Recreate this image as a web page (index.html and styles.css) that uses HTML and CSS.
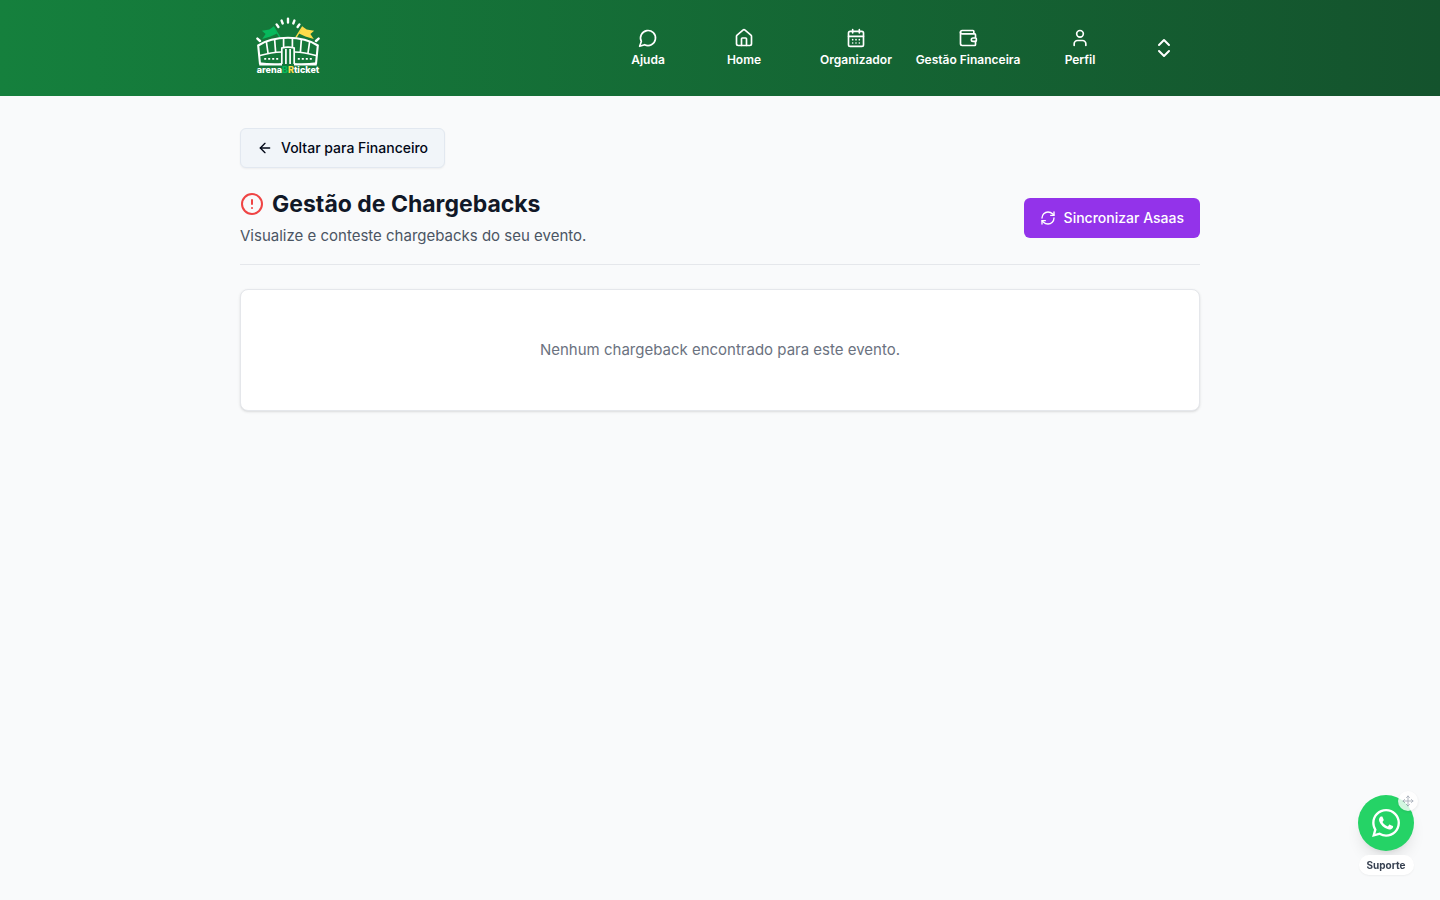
FILE: index.html
```html
<!DOCTYPE html>
<html lang="pt-BR">
<head>
  <meta charset="UTF-8" />
  <meta name="viewport" content="width=device-width, initial-scale=1.0"/>
  <title>Gestão de Chargebacks</title>
  <link rel="stylesheet" href="styles.css">
</head>
<body>
  <header class="header">
    <div class="header-inner">
      <a href="#" class="logo" aria-label="arenaBRticket">
        <svg width="64" height="62" viewBox="0 0 64 62" fill="none">
          <!-- raios -->
          <g stroke="#fff" stroke-width="2.4" stroke-linecap="round">
            <path d="M20.6 7.4l1.8 2.6M25.6 3.6l1.1 2.9M32 1.6v4M38.4 3.6l-1.1 2.9M43.4 7.4l-1.8 2.6"/>
            <path d="M1.4 21.6l2.6 2.4M62.6 21.6l-2.6 2.4"/>
          </g>
          <!-- bandeiras -->
          <path d="M17.3 9.7L24 20.4" stroke="#07b85c" stroke-width="1.4"/>
          <path d="M17.3 9.7l-4 2.8-7.4 1.2 3.7 3.2-3.4 5.2 8.4-2.5 6.4-3z" fill="#07b85c"/>
          <path d="M46.7 9.7L40 20.4" stroke="#fddb4a" stroke-width="1.4"/>
          <path d="M46.7 9.7l4 2.8 7.4 1.2-3.7 3.2 3.4 5.2-8.4-2.5-6.4-3z" fill="#fddb4a"/>
          <!-- estádio -->
          <g stroke="#fff" stroke-width="1.7">
            <path d="M4 47L2.2 28.5Q14 20.8 32 20.8T61.8 28.5L60 47" stroke-width="2.1"/>
            <path d="M3 38.8Q16 35.2 25.5 35M61 38.8Q48 35.2 38.5 35"/>
            <path d="M10.4 25l1.6 11M18.6 22l1 13M27.6 21v9.5M36.4 21v9.5M45.4 22l-1 13M53.6 25l-1.6 11"/>
            <path d="M25.8 47V31q6.2-1.8 12.4 0v16M29.9 32v15M34.1 32v15"/>
          </g>
          <path d="M3 45.2Q14 46.6 26 46v2.4H3.3zM61 45.2Q50 46.6 38 46v2.4h22.7z" fill="#fff"/>
          <path d="M8.2 41.9h14M41.8 41.9h14" stroke="#fff" stroke-width="1.9" stroke-dasharray="2 2"/>
          <text x="32" y="56" text-anchor="middle" class="logo-text">arena<tspan fill="#07b85c">B</tspan><tspan fill="#fddb4a">R</tspan>ticket</text>
        </svg>
      </a>

      <nav class="nav">
        <a href="#" class="nav-item nav-item-first">
          <svg class="icon" viewBox="0 0 24 24"><path d="M7.9 20A9 9 0 1 0 4 16.1L2 22Z"/></svg>
          <span>Ajuda</span>
        </a>
        <a href="#" class="nav-item">
          <svg class="icon" viewBox="0 0 24 24"><path d="M15 21v-8a1 1 0 0 0-1-1h-4a1 1 0 0 0-1 1v8"/><path d="M3 10a2 2 0 0 1 .709-1.528l7-5.999a2 2 0 0 1 2.582 0l7 5.999A2 2 0 0 1 21 10v9a2 2 0 0 1-2 2H5a2 2 0 0 1-2-2z"/></svg>
          <span>Home</span>
        </a>
        <a href="#" class="nav-item">
          <svg class="icon" viewBox="0 0 24 24"><path d="M8 2v4M16 2v4"/><rect width="18" height="18" x="3" y="4" rx="2"/><path d="M3 10h18M8 14h.01M12 14h.01M16 14h.01M8 18h.01M12 18h.01M16 18h.01"/></svg>
          <span>Organizador</span>
        </a>
        <a href="#" class="nav-item">
          <svg class="icon" viewBox="0 0 24 24"><path d="M19 7V4a1 1 0 0 0-1-1H5a2 2 0 0 0 0 4h15a1 1 0 0 1 1 1v4h-3a2 2 0 0 0 0 4h3a1 1 0 0 0 1-1v-2a1 1 0 0 0-1-1"/><path d="M3 5v14a2 2 0 0 0 2 2h15a1 1 0 0 0 1-1v-4"/></svg>
          <span>Gestão Financeira</span>
        </a>
        <a href="#" class="nav-item">
          <svg class="icon" viewBox="0 0 24 24"><path d="M19 21v-2a4 4 0 0 0-4-4H9a4 4 0 0 0-4 4v2"/><circle cx="12" cy="7" r="4"/></svg>
          <span>Perfil</span>
        </a>
        <button type="button" class="nav-toggle" aria-label="Abrir menu">
          <svg class="icon icon-lg" viewBox="0 0 24 24"><path d="m7 15 5 5 5-5"/><path d="m7 9 5-5 5 5"/></svg>
        </button>
      </nav>
    </div>
  </header>

  <main class="container">
    <button type="button" class="btn btn-back">
      <svg class="icon icon-sm" viewBox="0 0 24 24"><path d="m12 19-7-7 7-7"/><path d="M19 12H5"/></svg>
      Voltar para Financeiro
    </button>

    <div class="page-header">
      <div>
        <h1>
          <svg class="icon icon-lg icon-alert" viewBox="0 0 24 24"><circle cx="12" cy="12" r="10"/><path d="M12 8v4M12 16h.01"/></svg>
          Gestão de Chargebacks
        </h1>
        <p class="subtitle">Visualize e conteste chargebacks do seu evento.</p>
      </div>
      <button type="button" class="btn btn-sync">
        <svg class="icon icon-sm" viewBox="0 0 24 24"><path d="M3 12a9 9 0 0 1 9-9 9.75 9.75 0 0 1 6.74 2.74L21 8"/><path d="M21 3v5h-5"/><path d="M21 12a9 9 0 0 1-9 9 9.75 9.75 0 0 1-6.74-2.74L3 16"/><path d="M8 16H3v5"/></svg>
        Sincronizar Asaas
      </button>
    </div>

    <section class="card">
      <p>Nenhum chargeback encontrado para este evento.</p>
    </section>
  </main>

  <div class="support">
    <button type="button" class="support-btn" aria-labelledby="supportLabel">
      <svg width="28" height="28" viewBox="0 0 24 24" fill="#fff"><path d="M17.472 14.382c-.297-.149-1.758-.867-2.03-.967-.273-.099-.471-.148-.67.15-.197.297-.767.966-.94 1.164-.173.199-.347.223-.644.075-.297-.15-1.255-.463-2.39-1.475-.883-.788-1.48-1.761-1.653-2.059-.173-.297-.018-.458.13-.606.134-.133.298-.347.446-.52.149-.174.198-.298.298-.497.099-.198.05-.371-.025-.52-.075-.149-.669-1.612-.916-2.207-.242-.579-.487-.5-.669-.51-.173-.008-.371-.01-.57-.01-.198 0-.52.074-.792.372-.272.297-1.04 1.016-1.04 2.479 0 1.462 1.065 2.875 1.213 3.074.149.198 2.096 3.2 5.077 4.487.709.306 1.262.489 1.694.625.712.227 1.36.195 1.871.118.571-.085 1.758-.719 2.006-1.413.248-.694.248-1.289.173-1.413-.074-.124-.272-.198-.57-.347m-5.421 7.403h-.004a9.87 9.87 0 0 1-5.031-1.378l-.361-.214-3.741.982.998-3.648-.235-.374a9.86 9.86 0 0 1-1.51-5.26c.001-5.45 4.436-9.884 9.888-9.884 2.64 0 5.122 1.03 6.988 2.898a9.825 9.825 0 0 1 2.893 6.994c-.003 5.45-4.437 9.884-9.885 9.884m8.413-18.297A11.815 11.815 0 0 0 12.05 0C5.495 0 .16 5.335.157 11.892c0 2.096.547 4.142 1.588 5.945L.057 24l6.305-1.654a11.882 11.882 0 0 0 5.683 1.448h.005c6.554 0 11.89-5.335 11.893-11.893a11.821 11.821 0 0 0-3.48-8.413z"/></svg>
    </button>
    <span class="support-handle">
      <svg class="icon icon-xs" viewBox="0 0 24 24"><path d="M12 2v20M2 12h20M15 19l-3 3-3-3M19 9l3 3-3 3M5 9l-3 3 3 3M9 5l3-3 3 3"/></svg>
    </span>
    <span class="support-label" id="supportLabel">Suporte</span>
  </div>
</body>
</html>
```
FILE: styles.css
```css
* {
  box-sizing: border-box;
}
body {
  margin: 0;
  min-height: 100vh;
  font-family: Inter, "Liberation Sans", sans-serif;
  font-size: 15px;
  line-height: 24px;
  color: #020817;
  background-color: #f9fafb;
}
h1, p {
  margin: 0;
}
a {
  color: inherit;
  text-decoration: none;
}
button {
  font-family: inherit;
  border: 0;
  cursor: pointer;
}
.icon {
  width: 20px;
  height: 20px;
  flex-shrink: 0;
  fill: none;
  stroke: currentColor;
  stroke-width: 2;
  stroke-linecap: round;
  stroke-linejoin: round;
}
.icon-xs {
  width: 12px;
  height: 12px;
}
.icon-sm {
  width: 16px;
  height: 16px;
}
.icon-lg {
  width: 24px;
  height: 24px;
}

/* header */
.header {
  background: linear-gradient(to right, #15803d, #14532d);
  color: #fff;
}
.header-inner {
  display: flex;
  align-items: center;
  justify-content: space-between;
  max-width: 960px;
  height: 96px;
  margin: 0 auto;
  padding: 0 16px;
}
.logo {
  display: flex;
}
.logo-text {
  font-size: 9px;
  font-weight: 800;
  fill: #fff;
}
.nav {
  display: flex;
  align-items: center;
}
.nav-item {
  display: flex;
  flex-direction: column;
  align-items: center;
  gap: 4px;
  width: 112px;
  font-size: 12px;
  font-weight: 600;
  line-height: 16px;
  white-space: nowrap;
}
.nav-item-first {
  width: 80px;
}
.nav-toggle {
  display: flex;
  margin-left: 8px;
  padding: 8px;
  background: none;
  color: #fff;
}

/* content */
.container {
  max-width: 992px;
  margin: 0 auto;
  padding: 32px 16px;
}
.btn {
  display: flex;
  align-items: center;
  gap: 8px;
  height: 40px;
  padding: 0 16px;
  border-radius: 6px;
  font-size: 14px;
  font-weight: 500;
  line-height: 20px;
}
.btn-back {
  border: 1px solid #e2e8f0;
  background-color: #f1f5f9;
  color: #020817;
  box-shadow: 0 1px 2px rgba(0, 0, 0, 0.05);
}
.btn-sync {
  background-color: #9333ea;
  color: #fff;
}
.page-header {
  display: flex;
  align-items: center;
  justify-content: space-between;
  margin-top: 20px;
  padding-bottom: 16px;
  border-bottom: 1px solid #e5e7eb;
}
h1 {
  display: flex;
  align-items: center;
  gap: 8px;
  font-size: 23px;
  font-weight: 700;
  line-height: 32px;
  color: #111827;
}
.icon-alert {
  color: #ef4444;
}
.subtitle {
  margin-top: 4px;
  color: #4b5563;
}
.card {
  margin-top: 24px;
  padding: 48px;
  border: 1px solid #e5e7eb;
  border-radius: 8px;
  background-color: #fff;
  color: #6b7280;
  text-align: center;
  box-shadow: 0 1px 3px rgba(0, 0, 0, 0.1), 0 1px 2px -1px rgba(0, 0, 0, 0.1);
}

/* support */
.support {
  position: fixed;
  right: 26px;
  bottom: 25px;
  display: flex;
  flex-direction: column;
  align-items: center;
  gap: 4px;
}
.support-btn {
  display: flex;
  align-items: center;
  justify-content: center;
  width: 56px;
  height: 56px;
  padding: 0;
  border-radius: 50%;
  background-color: #25d366;
  box-shadow: 0 10px 15px -3px rgba(0, 0, 0, 0.1), 0 4px 6px -4px rgba(0, 0, 0, 0.1);
}
.support-handle {
  position: absolute;
  top: -4px;
  right: -4px;
  display: flex;
  padding: 4px;
  border-radius: 50%;
  background-color: #fff;
  color: #9ca3af;
  opacity: 0.8;
  box-shadow: 0 1px 3px rgba(0, 0, 0, 0.1);
}
.support-label {
  padding: 2px 8px;
  border-radius: 10px;
  background-color: #fff;
  color: #374151;
  font-size: 10px;
  font-weight: 700;
  line-height: 16px;
  box-shadow: 0 1px 2px rgba(0, 0, 0, 0.05);
}
```
